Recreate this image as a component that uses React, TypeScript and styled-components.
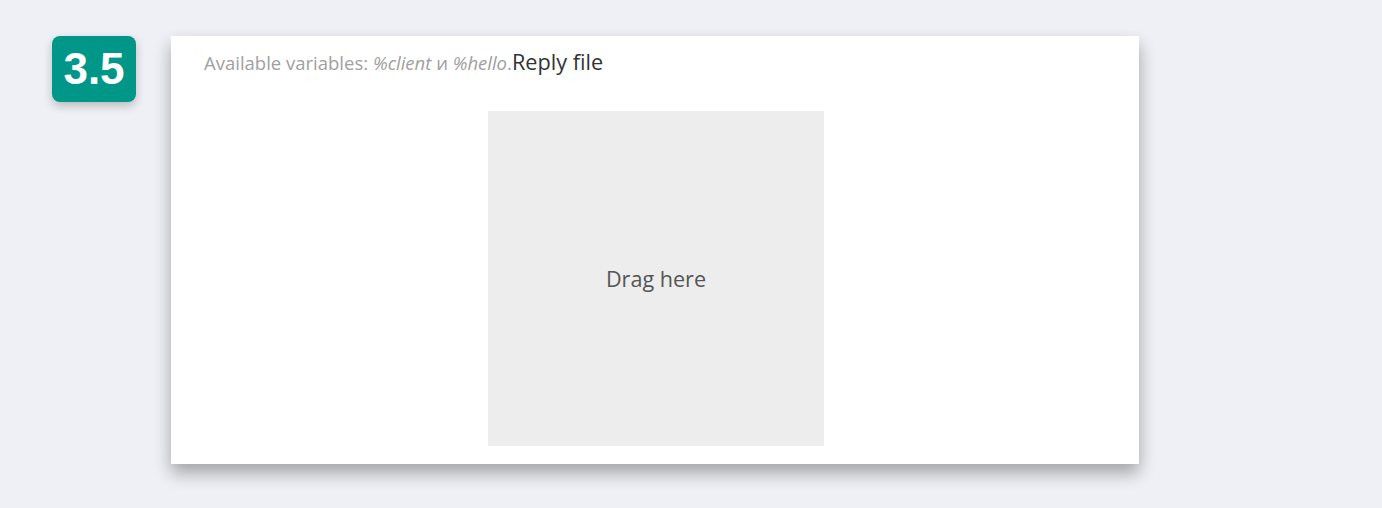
import React from "react";
import styled, { createGlobalStyle } from "styled-components";

const Global = createGlobalStyle`
  html, body { margin: 0; padding: 0; background: #eff0f5; }
  body { font-family: "Open Sans", "Noto Sans", sans-serif; }
`;

const Page = styled.div`
  display: flex;
  align-items: flex-start;
  gap: 35px;
  padding: 36px 0 0 52px;
  min-height: 508px;
  box-sizing: border-box;
`;

const Badge = styled.div`
  width: 84px;
  height: 66px;
  border-radius: 8px;
  background: #009688;
  color: #fff;
  font-family: "Liberation Sans", Arial, sans-serif;
  font-weight: 700;
  font-size: 44px;
  display: flex;
  align-items: center;
  justify-content: center;
  box-shadow: 0 4px 10px rgba(0, 0, 0, 0.22);
`;

const Card = styled.div`
  width: 968px;
  height: 428px;
  background: #fff;
  box-sizing: border-box;
  padding: 12px 33px 0;
  box-shadow: 0 9px 16px rgba(0, 0, 0, 0.32);
  display: flex;
  flex-direction: column;
`;

const Header = styled.div`
  font-size: 18.5px;
  line-height: 28px;
  height: 28px;
  color: #a0a0a0;
  white-space: nowrap;
`;

const Var = styled.em`
  font-style: italic;
`;

const Title = styled.span`
  font-size: 21.7px;
  color: #333;
`;

const DropZone = styled.div`
  align-self: center;
  margin-top: 35px;
  width: 336px;
  height: 335px;
  background: #ededed;
  display: flex;
  align-items: center;
  justify-content: center;
  font-size: 21.6px;
  color: #555;
  margin-left: 2px;
`;

export default function App() {
  return (
    <>
      <Global />
      <Page>
        <Badge>3.5</Badge>
        <Card>
          <Header>
            Available variables: <Var>%client</Var> и <Var>%hello</Var>.
            <Title>Reply file</Title>
          </Header>
          <DropZone>Drag here</DropZone>
        </Card>
      </Page>
    </>
  );
}
